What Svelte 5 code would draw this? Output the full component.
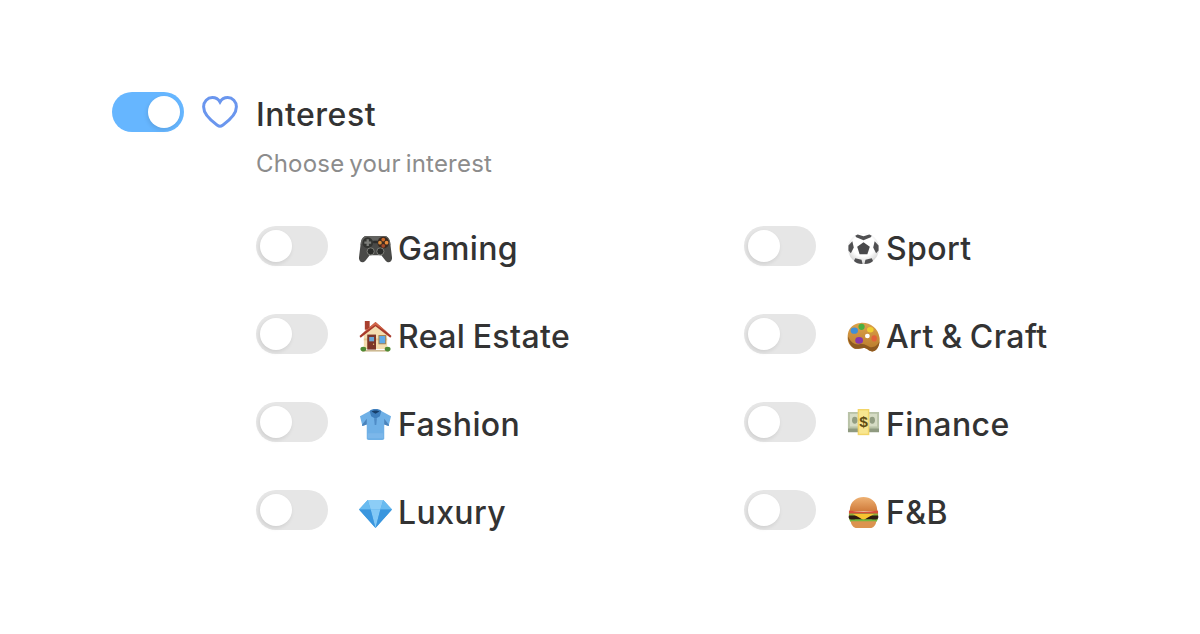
<script>
  const items = [
    { icon: 'pad', label: 'Gaming' },
    { icon: 'ball', label: 'Sport' },
    { icon: 'house', label: 'Real Estate' },
    { icon: 'palette', label: 'Art & Craft' },
    { icon: 'shirt', label: 'Fashion' },
    { icon: 'money', label: 'Finance' },
    { icon: 'gem', label: 'Luxury' },
    { icon: 'burger', label: 'F&B' }
  ];
</script>

{#snippet emoji(name)}
  <svg class="emoji" viewBox="0 0 34 34" aria-hidden="true">
    {#if name === 'pad'}
      <path d="M8 4h18c3 0 5 2 6 6l2 16c.4 5-4 7-7 3l-4-5H11l-4 5c-3 4-7.400 2-7-3l2-16c1-4 3-6 6-6z" fill="#4a4a48"/>
      <path d="M8 4h18c3 0 5 2 6 6l.5 4c-3-4-8-5-15.500-5S4 10 1.500 14l.5-4c1-4 3-6 6-6z" fill="#62625f"/>
      <circle cx="9" cy="11" r="5.500" fill="#333431"/>
      <path d="M7.800 7.500h2.400v2.300h2.300v2.400h-2.300v2.300H7.800v-2.300H5.500V9.800h2.300z" fill="#7c7d79"/>
      <circle cx="25" cy="11" r="6" fill="#3a2a20"/>
      <circle cx="25" cy="7.800" r="1.900" fill="#cf6a2a"/><circle cx="28.400" cy="11" r="1.900" fill="#e88a3a"/>
      <circle cx="21.600" cy="11" r="1.900" fill="#d98b3a"/><circle cx="25" cy="14.200" r="1.900" fill="#a5492a"/>
      <rect x="14.500" y="9" width="5" height="2.500" rx="1" fill="#2c2c2b"/>
      <circle cx="12" cy="20" r="3.700" fill="#2b2c2a" stroke="#85867f" stroke-width=".9"/>
      <circle cx="22" cy="20" r="3.700" fill="#2b2c2a" stroke="#85867f" stroke-width=".9"/>
    {:else if name === 'house'}
      <path d="M5 14 17 4l12 10v16H5z" fill="#f4ddb0"/>
      <path d="M5 19h24v2H5z" fill="#e6c690"/>
      <path d="M6 1h5v9H6z" fill="#a9402f"/>
      <path d="M17 2 33.500 16.500l-1.200 1.800L17 6.500 1.700 18.300.5 16.500z" fill="#a83a2b"/>
      <path d="M17 2 30 13.500 17 5 4 13.500z" fill="#d2674a"/>
      <path d="M8.500 15h9v15.500h-9z" fill="#7c3529"/>
      <path d="M10.500 17.500h5v4.500h-5z" fill="#6aa6d6"/>
      <circle cx="15" cy="25" r=".7" fill="#e8c070"/>
      <path d="M20 15.500h8V25h-8z" fill="#a5814f"/><path d="M21 16.500h6V24h-6z" fill="#5fa9e8"/>
      <path d="M3 31h28v1.500H3z" fill="#c9b48a"/>
      <ellipse cx="4.500" cy="30" rx="3" ry="2.500" fill="#4f8a35"/><ellipse cx="29.500" cy="30" rx="3" ry="2.500" fill="#4f8a35"/>
    {:else if name === 'shirt'}
      <path d="M11 3h12l10 5.500-2.500 10-4.500-1.500v14.500c0 1-.8 1.500-2 1.500H10c-1.200 0-2-.5-2-1.500V17l-4.500 1.500L1 8.500z" fill="#6fb0e6"/>
      <path d="M8 17v-6l-5 6.500.500 1zM26 17v-6l5 6.500-.500 1z" fill="#4b83bb"/>
      <path d="M11 3c2-2.500 10-2.500 12 0l-1.500 5.500L17 11l-4.500-2.500z" fill="#3f7fbd"/>
      <path d="M13 3.500c2-1.300 6-1.300 8 0L17 6z" fill="#173f6a"/>
      <path d="M15.500 10.500h3l-.7 7h-1.600z" fill="#4f8cc7"/>
      <path d="M9 26h16v5H9z" fill="#85bdec" opacity=".6"/>
    {:else if name === 'gem'}
      <path d="M9 4h16l9 10L17 33 0 14z" fill="#4fa8e8"/>
      <path d="M9 4h16l-3 10H12z" fill="#8ccdf6"/>
      <path d="M9 4l3 10H0zM25 4l-3 10h12z" fill="#69bbf0"/>
      <path d="M12 14h10l-5 19z" fill="#82c8f6"/>
      <path d="M0 14h12l5 19zM34 14H22l-5 19z" fill="#3a96de"/>
    {:else if name === 'ball'}
      <defs>
        <radialGradient id="ballFill" cx=".5" cy=".4" r=".65">
          <stop offset=".55" stop-color="#fff"/><stop offset="1" stop-color="#c9c9c9"/>
        </radialGradient>
      </defs>
      <circle cx="17" cy="17" r="16" fill="url(#ballFill)"/>
      <path d="M17 10.500l6.500 4.700-2.500 7.600h-8l-2.500-7.600z" fill="#4a4a4c"/>
      <path d="M11 2.500 17 4.500l6-2 2.500 1.300-1 1.700-7.500 3-7.500-3-1-1.700zM1.500 14l4-4.500 1.500 6.500-3 6-2.500-3zM32.500 14l-4-4.500-1.500 6.500 3 6 2.500-3zM8.500 27l6.500 1.500 1 4.500c-4 0-7-1-8.800-3zM25.500 27 19 28.500l-1 4.500c4 0 7-1 8.800-3z" fill="#505052"/>
    {:else if name === 'palette'}
      <defs>
        <linearGradient id="woodFill" x1="0" y1="0" x2="0" y2="1">
          <stop offset="0" stop-color="#dca24c"/><stop offset="1" stop-color="#b87a2a"/>
        </linearGradient>
      </defs>
      <path d="M14 3c9-1 18 5 19.500 15 .7 5-1 12-5.500 14-4 1.500-6-2-9-3-4-1-8 2-12 0C1 26 0 20 1 14 2 8 7 3.500 14 3z" fill="url(#woodFill)"/>
      <path d="M1 17c3 6 7 9 12 8 5-1 8 2 11 3 4 .5 7-1 9.500-6-.5 5-2.500 9-5.500 10-4 1.500-6-2-9-3-4-1-8 2-12 0-3-2-6-7-6-12z" fill="#8f5a20"/>
      <ellipse cx="7.500" cy="11" rx="3.800" ry="3.200" fill="#3f8fd6"/><ellipse cx="15" cy="7" rx="3.200" ry="3.200" fill="#4caf3f"/>
      <ellipse cx="24" cy="10" rx="3.400" ry="2.800" fill="#f0cf30"/><ellipse cx="12.500" cy="21" rx="4" ry="3.400" fill="#8a35a8"/>
      <ellipse cx="28" cy="19" rx="2.800" ry="3.200" fill="#e2623a"/><ellipse cx="21" cy="16.500" rx="2.500" ry="2.300" fill="#fff"/>
    {:else if name === 'money'}
      <path d="M1 4h32v21H1z" fill="#8f9a80"/>
      <path d="M1 4h32v17H1z" fill="#b9c3a8"/>
      <path d="M3 6h28v13H3z" fill="#d6dcc5"/>
      <ellipse cx="8" cy="12.500" rx="2.800" ry="3.600" fill="#929d82"/><ellipse cx="26" cy="12.500" rx="2.800" ry="3.600" fill="#929d82"/>
      <path d="M11 1h12v27H11z" fill="#f2d568"/>
      <path d="M12.500 2.500h9v24h-9z" fill="#f8e690"/>
      <text x="17" y="19.500" class="dollar">$</text>
    {:else if name === 'burger'}
      <defs>
        <linearGradient id="bunFill" x1="0" y1="0" x2="0" y2="1">
          <stop offset="0" stop-color="#eeb173"/><stop offset="1" stop-color="#cf7a3a"/>
        </linearGradient>
      </defs>
      <path d="M3 16C2 6 10 1 17 1s15 5 14 15z" fill="url(#bunFill)"/>
      <path d="M2 15c10 2 20 2 30 0v4H2z" fill="#d9513a"/>
      <path d="M2 18h30v3H2z" fill="#8bb03a"/>
      <path d="M2 20h30c1 3-1 5-3 5H5c-2 0-4-2-3-5z" fill="#2e1d12"/>
      <path d="M6 18.500h22l-7 4-4 2.500-4-2.500z" fill="#f7c430"/>
      <path d="M2 23.500c3 1.500 5 .5 7 .5h16c2 0 4 1 7-.5-1 2-1 3-3 4H5c-2-1-2-2-3-4z" fill="#74b83e"/>
      <path d="M4 26h26c0 4-3 7-6 7H10c-3 0-6-3-6-7z" fill="#dc9350"/>
    {/if}
  </svg>
{/snippet}

<main class="page">
  <span class="toggle on"><span class="knob"></span></span>
  <svg class="heart" viewBox="0 0 36 32" aria-hidden="true">
    <path d="M18 30.200c-1 0-2-.6-3-1.300C8 24 1.600 18.500 1.600 10.800 1.600 5.500 5.500 1.600 10.300 1.600c3.400 0 6.200 1.700 7.700 4.400 1.500-2.700 4.300-4.400 7.700-4.400 4.800 0 8.700 3.900 8.700 9.200 0 7.700-6.400 13.200-13.400 18.100-1 .7-2 1.300-3 1.300z"/>
  </svg>
  <div class="content">
    <h1>Interest</h1>
    <p>Choose your interest</p>
    <ul class="grid">
      {#each items as item}
        <li>
          <span class="toggle"><span class="knob"></span></span>
          {@render emoji(item.icon)}
          <span class="label">{item.label}</span>
        </li>
      {/each}
    </ul>
  </div>
</main>

<style>
  :global(body) {
    margin: 0;
    background: #fff;
  }
  .page {
    display: flex;
    align-items: flex-start;
    width: 1200px;
    height: 634px;
    box-sizing: border-box;
    padding: 92px 0 0 112px;
    overflow: hidden;
    font-family: Inter, "Noto Sans", sans-serif;
    color: #333;
  }
  .toggle {
    position: relative;
    display: block;
    flex: none;
    width: 72px;
    height: 40px;
    border-radius: 20px;
    background: #e6e6e6;
  }
  .toggle.on {
    background: #66b6ff;
  }
  .knob {
    position: absolute;
    left: 4px;
    top: 4px;
    width: 32px;
    height: 32px;
    border-radius: 50%;
    background: #fff;
    box-shadow: -1px 2px 4px rgba(0, 0, 0, 0.1);
  }
  .on .knob {
    left: auto;
    right: 4px;
  }
  .heart {
    flex: none;
    width: 36px;
    height: 32px;
    margin: 4px 18px 0;
    fill: none;
    stroke: #6a96ee;
    stroke-width: 3;
  }
  .content {
    flex: 1;
  }
  h1 {
    margin: 0;
    font-size: 32px;
    line-height: 46px;
    font-weight: 500;
    letter-spacing: 0.5px;
  }
  p {
    margin: 10px 0 0;
    font-size: 24px;
    line-height: 32px;
    font-weight: 400;
    letter-spacing: 0.2px;
    word-spacing: -2px;
    color: #8c8c8c;
  }
  .grid {
    display: grid;
    grid-template-columns: 488px 1fr;
    row-gap: 48px;
    margin: 46px 0 0;
    padding: 0;
    list-style: none;
  }
  li {
    display: flex;
    align-items: center;
    height: 40px;
  }
  .emoji {
    flex: none;
    width: 33px;
    height: 33px;
    margin: 4px 6px 0 31px;
  }
  .dollar {
    font-family: "Liberation Sans", sans-serif;
    font-size: 16px;
    font-weight: 700;
    text-anchor: middle;
    fill: #5f4d14;
  }
  .label {
    margin-top: 6px;
    font-size: 32px;
    line-height: 40px;
    font-weight: 500;
    letter-spacing: 0.4px;
    word-spacing: -1.5px;
  }
</style>
